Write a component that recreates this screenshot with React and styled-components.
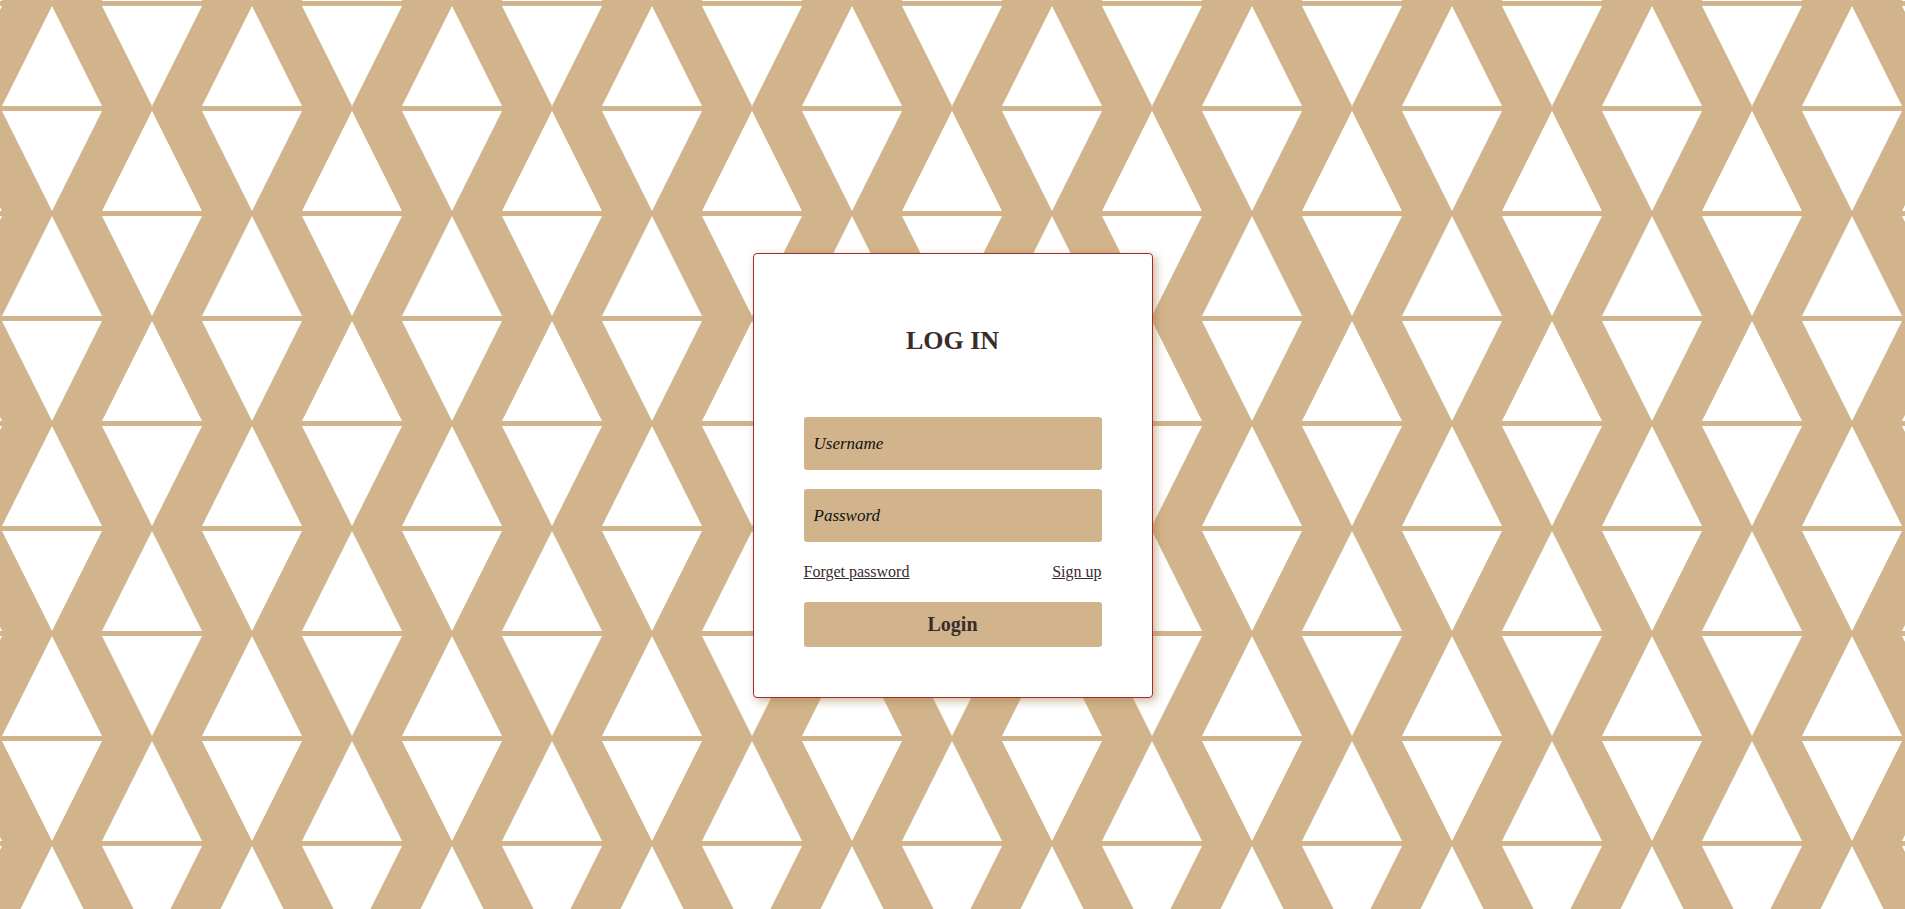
import React from 'react';
import styled, { createGlobalStyle } from 'styled-components';

const TAN = '#d2b48c';
const INK = '#3a2c2c';

// one 200x210 tile of the zigzag triangle background
const tile = `<svg xmlns='http://www.w3.org/2000/svg' width='200' height='210' viewBox='0 0 200 210'>
<rect width='200' height='210' fill='${TAN}'/>
<g fill='#fff'>
<polygon points='0,100 50,0 100,100'/>
<polygon points='100,0 200,0 150,100'/>
<polygon points='0,105 100,105 50,205'/>
<polygon points='100,205 150,105 200,205'/>
</g>
</svg>`;

const GlobalStyle = createGlobalStyle`
    html, body {
        margin: 0;
        padding: 0;
        min-height: 100%;
    }
    body {
        min-height: 100vh;
        background-color: ${TAN};
        background-image: url("data:image/svg+xml;utf8,${encodeURIComponent(tile)}");
        background-size: 200px 210px;
        background-position: 2px 6px;
        font-family: "Liberation Serif", "Times New Roman", serif;
        color: ${INK};
    }
`;

const Page = styled.div`
    min-height: 100vh;
    display: flex;
    justify-content: center;
    align-items: flex-start;
    padding-top: 253px;
    box-sizing: border-box;
`;

const Card = styled.form`
    width: 400px;
    box-sizing: border-box;
    padding: 72px 50px 50px;
    background: #fff;
    border: 1px solid #a52a2a;
    border-radius: 4px;
    box-shadow: 3px 3px 10px rgba(160, 120, 70, 0.55);
    display: flex;
    flex-direction: column;
`;

const Title = styled.h2`
    margin: 0 0 61px;
    font-size: 26px;
    line-height: 30px;
    font-weight: 700;
    text-align: center;
    color: ${INK};
`;

const Field = styled.input`
    height: 53px;
    margin-bottom: ${(p) => (p.$last ? '20px' : '19px')};
    padding: 0 10px;
    box-sizing: border-box;
    border: none;
    border-radius: 3px;
    background: ${TAN};
    font-family: "Liberation Serif", "Times New Roman", serif;
    font-size: 17px;
    font-style: italic;
    color: #111;
    outline: none;

    &::placeholder {
        color: #111;
        opacity: 1;
    }
`;

const LinkRow = styled.div`
    display: flex;
    justify-content: space-between;
    line-height: 20px;
    font-size: 16px;
    margin-bottom: 20px;
`;

const TextLink = styled.a`
    color: ${INK};
    text-decoration: underline;
    cursor: pointer;
`;

const Submit = styled.button`
    height: 45px;
    border: none;
    border-radius: 3px;
    background: ${TAN};
    font-family: "Liberation Serif", "Times New Roman", serif;
    font-size: 20px;
    font-weight: 700;
    color: ${INK};
    cursor: pointer;
`;

const App = () => (
    <>
        <GlobalStyle />
        <Page>
            <Card onSubmit={(e) => e.preventDefault()}>
                <Title>LOG IN</Title>
                <Field type="text" placeholder="Username" />
                <Field type="password" placeholder="Password" $last />
                <LinkRow>
                    <TextLink>Forget password</TextLink>
                    <TextLink>Sign up</TextLink>
                </LinkRow>
                <Submit type="submit">Login</Submit>
            </Card>
        </Page>
    </>
);

export default App;
